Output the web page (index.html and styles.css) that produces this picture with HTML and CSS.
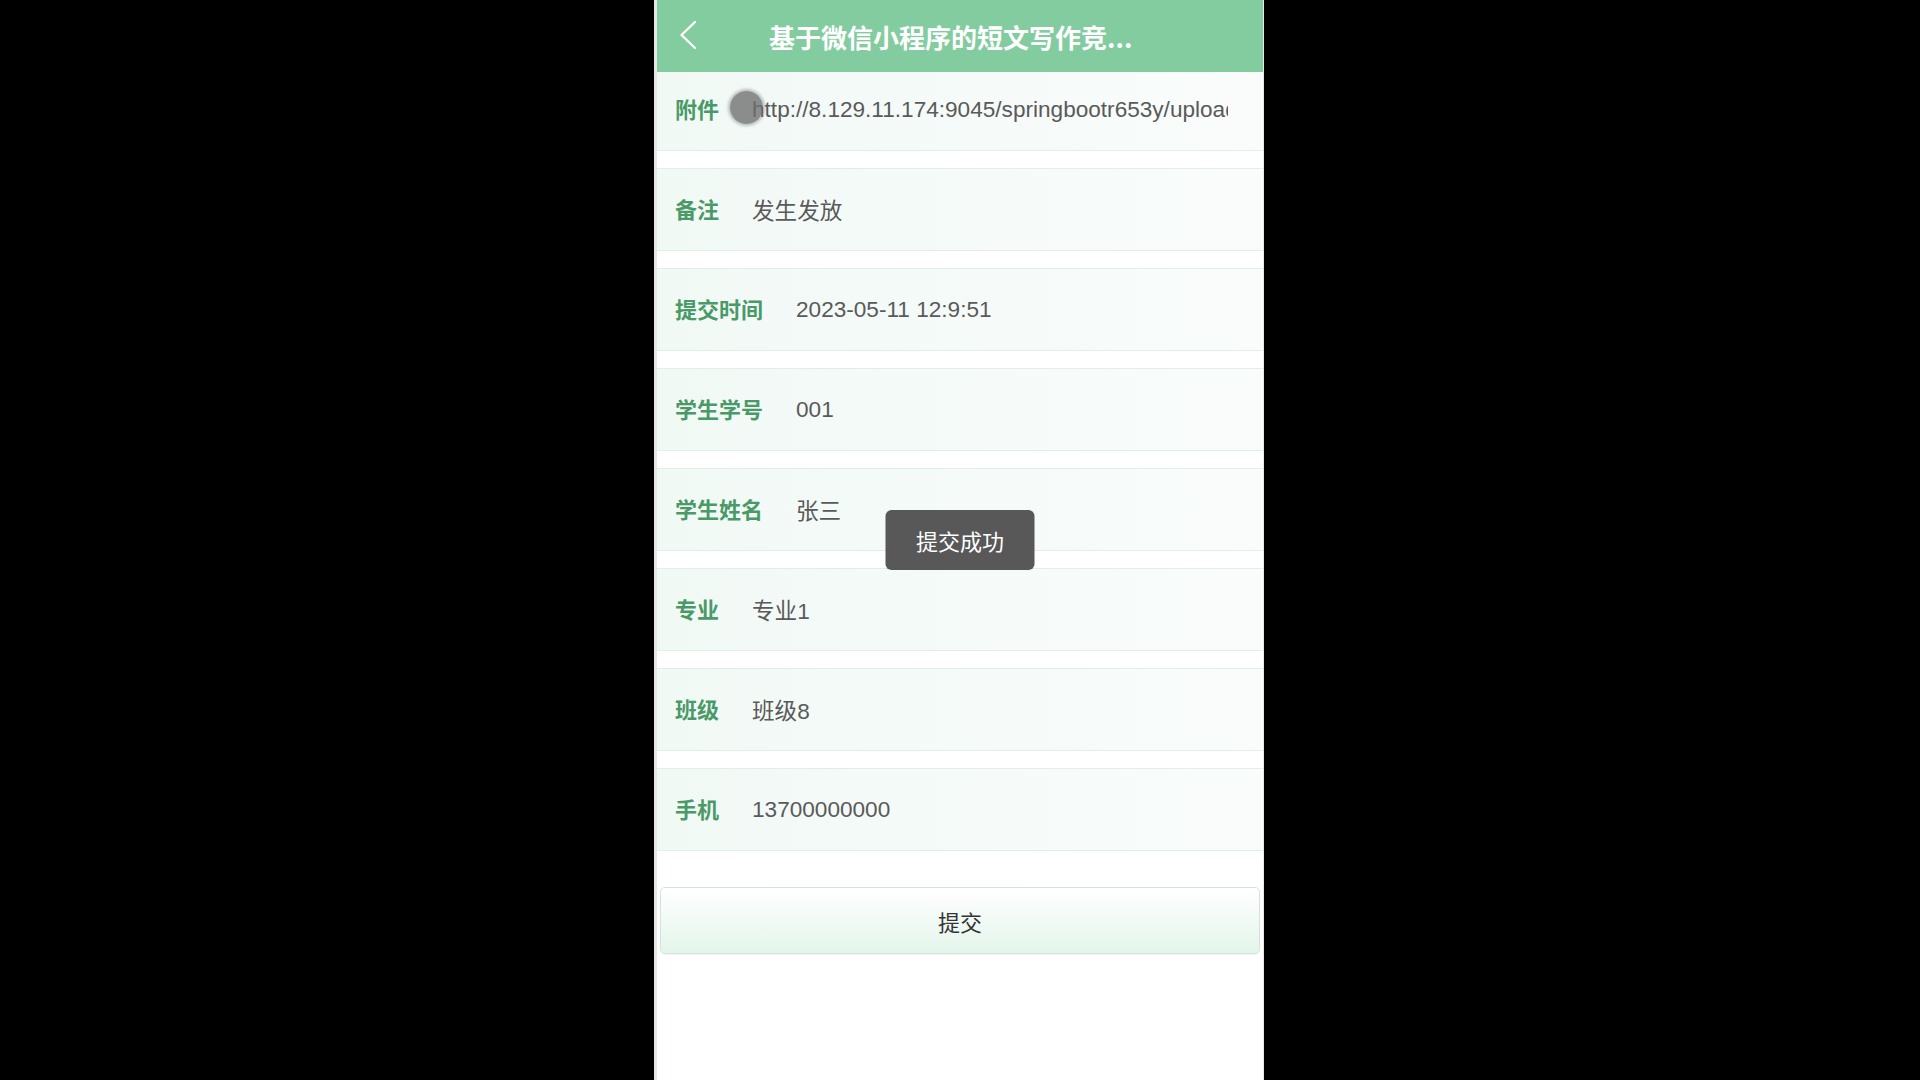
FILE: index.html
```html
<!DOCTYPE html>
<html lang="zh-CN">
<head>
<meta charset="utf-8">
<title>短文写作竞赛</title>
<link rel="stylesheet" href="styles.css">
</head>
<body>
<div class="phone">
  <header class="nav">
    <span class="back">
      <svg width="18" height="30" viewBox="0 0 18 30"><polyline points="16,2 2.5,15 16,28" fill="none" stroke="#ffffff" stroke-width="2.4" stroke-linecap="round" stroke-linejoin="round"/></svg>
    </span>
    <h1 class="title">基于微信小程序的短文写作竞...</h1>
  </header>
  <div class="list">
    <div class="row first">
      <span class="label">附件</span>
      <span class="value">http://8.129.11.174:9045/springbootr653y/upload/1683778191552.docx</span>
      <span class="touch"></span>
    </div>
    <div class="row"><span class="label">备注</span><span class="value">发生发放</span></div>
    <div class="row"><span class="label">提交时间</span><span class="value">2023-05-11 12:9:51</span></div>
    <div class="row"><span class="label">学生学号</span><span class="value">001</span></div>
    <div class="row"><span class="label">学生姓名</span><span class="value">张三</span></div>
    <div class="row"><span class="label">专业</span><span class="value">专业1</span></div>
    <div class="row"><span class="label">班级</span><span class="value">班级8</span></div>
    <div class="row"><span class="label">手机</span><span class="value">13700000000</span></div>
  </div>
  <div class="actions">
    <button class="submit" type="button">提交</button>
  </div>
  <div class="toast">提交成功</div>
</div>
</body>
</html>
```

FILE: styles.css
```css
html, body {
  margin: 0;
  padding: 0;
  background: #000;
  height: 100%;
}

body {
  font-family: "Liberation Sans", "Noto Sans CJK SC", sans-serif;
}

.phone {
  position: relative;
  width: 606px;
  height: 1080px;
  margin-left: 654px;
  background: #fff;
  border-left: 3px solid #e6e8e7;
  border-right: 1px solid #e6e8e7;
  overflow: hidden;
}

.nav {
  height: 72px;
  background: #83cc9f;
  display: flex;
  align-items: center;
  padding-left: 22px;
  box-sizing: border-box;
}

.back {
  display: flex;
  width: 18px;
  height: 30px;
  margin-top: -2px;
}

.title {
  margin: 0 0 0 72px;
  font-size: 26px;
  font-weight: bold;
  color: #fff;
  white-space: nowrap;
  font-family: "Noto Sans CJK SC", sans-serif;
}

.list {
  display: flex;
  flex-direction: column;
  gap: 17px;
}

.row {
  position: relative;
  display: flex;
  align-items: center;
  height: 83px;
  box-sizing: border-box;
  padding: 0 35px 0 18px;
  background: linear-gradient(90deg, #f1f9f5 0%, #f6fbf9 60%, #f9fcfb 100%);
  border-top: 1px solid #e2eeea;
  border-bottom: 1px solid #e2eeea;
}

.row.first {
  height: 79px;
  border-top: none;
  padding-bottom: 3px;
}

.label {
  flex: none;
  font-size: 22px;
  font-weight: bold;
  color: #4a9968;
  margin-right: 33px;
  margin-bottom: 3px;
  font-family: "Noto Sans CJK SC", sans-serif;
}

.value {
  flex: 1 1 auto;
  min-width: 0;
  overflow: hidden;
  white-space: nowrap;
  font-size: 22.6px;
  color: #5a5a5a;
}

.touch {
  position: absolute;
  left: 73px;
  top: 19px;
  width: 33px;
  height: 33px;
  border-radius: 50%;
  background: rgba(110, 110, 110, 0.78);
  box-shadow: 0 0 3px 2px rgba(120, 120, 120, 0.45);
}

.actions {
  padding: 36px 3px 0;
}

.submit {
  display: block;
  width: 100%;
  height: 67px;
  border: 1px solid #d3e4dc;
  border-radius: 5px;
  background: linear-gradient(180deg, #ffffff 0%, #f3faf6 45%, #e3f5ea 100%);
  box-shadow: 0 1px 2px rgba(0, 0, 0, 0.06);
  font-size: 22px;
  color: #333;
  font-family: "Noto Sans CJK SC", sans-serif;
}

.toast {
  position: absolute;
  left: 50%;
  top: 50%;
  transform: translate(-50%, -50%);
  width: 149px;
  height: 60px;
  border-radius: 6px;
  background: #585858;
  color: #fff;
  font-size: 22px;
  display: flex;
  align-items: center;
  justify-content: center;
  font-family: "Noto Sans CJK SC", sans-serif;
}
```
